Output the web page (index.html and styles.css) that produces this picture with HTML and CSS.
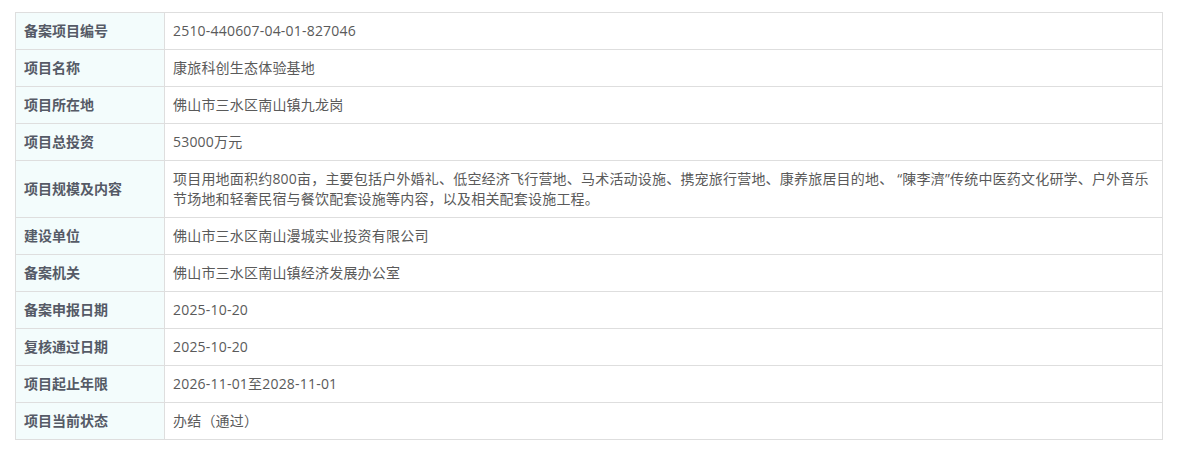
FILE: index.html
```html
<!DOCTYPE html>
<html lang="zh-CN">
<head>
  <meta charset="UTF-8">
  <title>备案项目信息</title>
  <link rel="stylesheet" href="styles.css">
</head>
<body>
  <div class="wrap">
    <table class="info">
      <tr><th>备案项目编号</th><td>2510-440607-04-01-827046</td></tr>
      <tr><th>项目名称</th><td>康旅科创生态体验基地</td></tr>
      <tr><th>项目所在地</th><td>佛山市三水区南山镇九龙岗</td></tr>
      <tr><th>项目总投资</th><td>53000万元</td></tr>
      <tr><th>项目规模及内容</th><td>项目用地面积约800亩，主要包括户外婚礼、低空经济飞行营地、马术活动设施、携宠旅行营地、康养旅居目的地、 “陳李濟”传统中医药文化研学、户外音乐节场地和轻奢民宿与餐饮配套设施等内容，以及相关配套设施工程。</td></tr>
      <tr><th>建设单位</th><td>佛山市三水区南山漫城实业投资有限公司</td></tr>
      <tr><th>备案机关</th><td>佛山市三水区南山镇经济发展办公室</td></tr>
      <tr><th>备案申报日期</th><td>2025-10-20</td></tr>
      <tr><th>复核通过日期</th><td>2025-10-20</td></tr>
      <tr><th>项目起止年限</th><td>2026-11-01至2028-11-01</td></tr>
      <tr><th>项目当前状态</th><td>办结（通过）</td></tr>
    </table>
  </div>
</body>
</html>
```

FILE: styles.css
```css
body {
  margin: 0;
  background: #fff;
  font-family: "Open Sans", "Noto Sans CJK SC", sans-serif;
  font-size: 14px;
  color: #5a5a5a;
}
.wrap {
  padding: 12px 15px;
}
.info {
  width: 1148px;
  border-collapse: collapse;
  table-layout: fixed;
}
.info th,
.info td {
  border: 1px solid #dedede;
  padding: 8px 8px;
  line-height: 20px;
  text-align: left;
  vertical-align: middle;
}
.info td {
  letter-spacing: 0.2px;
}
.info th {
  width: 132px;
  background: #f3fcfc;
  font-weight: bold;
  color: #555a66;
}
```
